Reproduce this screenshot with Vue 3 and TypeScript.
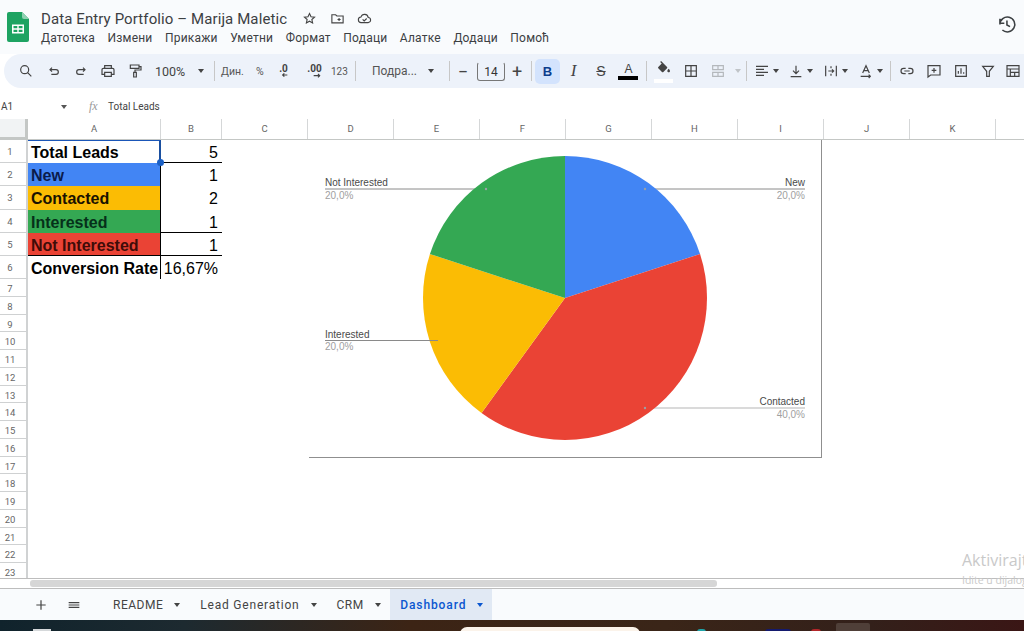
<script setup lang="ts">
import { h, type FunctionalComponent } from 'vue'

// icon strokes, 24 box
const icons: Record<string, string> = {
  star: 'M12 4l2.4 5.2 5.6.6-4.2 3.8 1.2 5.6L12 16.4 7 19.2l1.2-5.6L4 9.8l5.6-.6z',
  folder: 'M3 6h6l2 2h10v11H3zM12 13.5h5M14.500 11v5',
  cloud: 'M7 18.500a4.500 4.500 0 0 1-.6-9A6 6 0 0 1 18 10.500a4 4 0 0 1-.5 8zM9 13.500l2.500 2.500 4-4',
  history: 'M4.500 12a8.500 8.500 0 1 1 2.800 6.300M4.500 5.500v5h5M12.500 7.500V12.500l3.500 2',
  search: 'M10 4a6 6 0 1 0 0 12a6 6 0 0 0 0-12zM14.500 14.500L20 20',
  undo: 'M9 7L6 10l3 3M6 10h9a3.500 3.500 0 0 1 0 7H8',
  redo: 'M15 7l3 3-3 3M18 10H9a3.500 3.500 0 0 0 0 7h7',
  print: 'M7 8V4h10v4M7 17H3v-7a2 2 0 0 1 2-2h14a2 2 0 0 1 2 2v7h-4M7 14h10v6H7z',
  paint: 'M5 3h13v5H5zM18 5.500h3v5h-9v3M10 14h4v7h-4z',
  dec: 'M13 18h7M15.500 15.500L13 18l2.500 2.500',
  inc: 'M10 19h9M16.500 16.500L19 19l-2.500 2.500',
  border: 'M4 4h16v16H4zM12 4v16M4 12h16',
  merge: 'M4 4h16v6H4zM4 14h16v6H4zM12 5v4M12 15v4',
  align: 'M3 5h18M3 9.500h12M3 14h18M3 18.500h12',
  valign: 'M12 4v12M7.500 11.500L12 16l4.500-4.500M4 20.500h16',
  wrap: 'M4 4v16M20 4v16M12 5v3M12 16v3M8 12h8M13.500 9.500L16 12l-2.500 2.500',
  rotate: 'M7 15L12 4l5 11M8.500 11.500h7M4 20h14M16 17.500l2.500 2.500-2.500 2.500',
  link: 'M10 8H7a4 4 0 0 0 0 8h3M14 8h3a4 4 0 0 1 0 8h-3M8 12h8',
  comment: 'M3 4h18v14H7l-4 3zM12 7.500v7M8.500 11h7',
  chart: 'M4 4h16v16H4zM8 16v-4M12 16V8M16 16v-2',
  filter: 'M4 5h16l-6 7.500V20h-4v-7.500z',
  table: 'M3 4h18v16H3zM3 9h18M8 14h13M8 9v11M14.500 14v6',
  menu: 'M4 8.500h16M4 12h16M4 15.500h16',
  plus: 'M12 5v14M5 12h14'
}

const Ic: FunctionalComponent<{ n: string }> = (props) =>
  h('svg', { viewBox: '0 0 24 24', class: 'ic' }, [
    h('path', { d: icons[props.n], fill: 'none', stroke: 'currentColor', 'stroke-width': 1.8 })
  ])

const menus = ['Датотека', 'Измени', 'Прикажи', 'Уметни', 'Формат', 'Подаци', 'Алатке', 'Додаци', 'Помоћ']
const columns = ['A', 'B', 'C', 'D', 'E', 'F', 'G', 'H', 'I', 'J', 'K', '']

const filled = [
  { label: 'Total Leads', value: '5', cls: 'r1' },
  { label: 'New', value: '1', cls: 'r2' },
  { label: 'Contacted', value: '2', cls: 'r3' },
  { label: 'Interested', value: '1', cls: 'r4' },
  { label: 'Not Interested', value: '1', cls: 'r5' },
  { label: 'Conversion Rate', value: '16,67%', cls: 'r6' }
]
const emptyRows = Array.from({ length: 17 }, (_, i) => i + 7)

// pie, in chart coordinates
const cx = 256
const cy = 158
const radius = 142
const data = [
  { name: 'New', share: 0.2, color: '#4285f4' },
  { name: 'Contacted', share: 0.4, color: '#ea4335' },
  { name: 'Interested', share: 0.2, color: '#fbbc04' },
  { name: 'Not Interested', share: 0.2, color: '#34a853' }
]
let acc = 0
const slices = data.map((d) => {
  const a0 = acc * Math.PI * 2
  acc += d.share
  const a1 = acc * Math.PI * 2
  const large = d.share > 0.5 ? 1 : 0
  const p = (a: number) => `${cx + radius * Math.sin(a)} ${cy - radius * Math.cos(a)}`
  return { ...d, d: `M${cx} ${cy}L${p(a0)}A${radius} ${radius} 0 ${large} 1 ${p(a1)}Z` }
})

const labels = [
  { name: 'Not Interested', pct: '20,0%', x: 16, y: 49, x2: 177, anchor: 'start', dot: true },
  { name: 'New', pct: '20,0%', x: 496, y: 49, x2: 336, anchor: 'end', dot: true },
  { name: 'Contacted', pct: '40,0%', x: 496, y: 268, x2: 336, anchor: 'end', dot: true },
  { name: 'Interested', pct: '20,0%', x: 16, y: 200.500, x2: 129, anchor: 'start', dot: false }
]

const tabs = ['README', 'Lead Generation', 'CRM']
</script>

<template>
  <div class="app">
    <header class="top">
      <svg class="logo" viewBox="0 0 22 30">
        <path d="M2 0h13l7 7v21a2 2 0 0 1-2 2H2a2 2 0 0 1-2-2V2a2 2 0 0 1 2-2z" fill="#1ea362" />
        <path d="M15 0l7 7h-5a2 2 0 0 1-2-2z" fill="#8ed1b1" />
        <path d="M5 12.500h12v9H5zM6.500 14v2.300h3.800V14zM11.700 14v2.300h3.800V14zM6.500 17.700V20h3.800v-2.300zM11.700 17.700V20h3.800v-2.300z" fill="#fff" fill-rule="evenodd" />
      </svg>
      <div class="doc">
        <div class="title-row">
          <span class="title">Data Entry Portfolio – Marija Maletic</span>
          <span class="title-icons"><Ic n="star" /><Ic n="folder" /><Ic n="cloud" /></span>
        </div>
        <nav class="menus">
          <span v-for="m in menus" :key="m">{{ m }}</span>
        </nav>
      </div>
      <Ic class="history" n="history" />
    </header>

    <div class="toolbar">
      <span class="t w29"><Ic n="search" /></span>
      <span class="t"><Ic n="undo" /></span>
      <span class="t"><Ic n="redo" /></span>
      <span class="t"><Ic n="print" /></span>
      <span class="t"><Ic n="paint" /></span>
      <span class="zoom">100%</span>
      <i class="arrow a-zoom"></i>
      <i class="sep s-zoom"></i>
      <span class="fmt din">Дин.</span>
      <span class="fmt pct">%</span>
      <span class="t dec"><b>.0</b><Ic n="dec" /></span>
      <span class="t dec inc"><b>.00</b><Ic n="inc" /></span>
      <span class="fmt num">123</span>
      <i class="sep s-num"></i>
      <span class="font">Подра...</span>
      <i class="arrow a-font"></i>
      <i class="sep s-font"></i>
      <span class="t minus">−</span>
      <span class="size">14</span>
      <span class="t plus">+</span>
      <i class="sep s-plus"></i>
      <span class="bold">B</span>
      <span class="t letter italic">I</span>
      <span class="t letter strike">S</span>
      <span class="t letter color">A</span>
      <i class="sep s-color"></i>
      <span class="t fill">
        <svg class="ic" viewBox="0 0 24 24">
          <path fill="#444" d="M16.560 8.940L7.620 0 6.210 1.410l2.380 2.380-5.150 5.150c-.59.59-.59 1.540 0 2.120l5.500 5.500c.29.29.68.44 1.060.44s.77-.15 1.060-.44l5.500-5.500c.59-.58.59-1.530 0-2.120zM19 11.500s-2 2.170-2 3.500c0 1.100.9 2 2 2s2-.9 2-2c0-1.330-2-3.500-2-3.500z" />
        </svg>
      </span>
      <span class="t"><Ic n="border" /></span>
      <span class="t off"><Ic n="merge" /></span>
      <i class="arrow off-a"></i>
      <i class="sep s-merge"></i>
      <span class="t t-drop"><Ic n="align" /></span><i class="arrow"></i>
      <span class="t t-drop"><Ic n="valign" /></span><i class="arrow"></i>
      <span class="t t-drop"><Ic n="wrap" /></span><i class="arrow"></i>
      <span class="t t-drop"><Ic n="rotate" /></span><i class="arrow"></i>
      <i class="sep s-rotate"></i>
      <span class="t"><Ic n="link" /></span>
      <span class="t"><Ic n="comment" /></span>
      <span class="t"><Ic n="chart" /></span>
      <span class="t"><Ic n="filter" /></span>
      <span class="t last"><Ic n="table" /></span>
    </div>

    <div class="formula">
      <span class="ref">A1</span>
      <i class="arrow ref-arrow"></i>
      <span class="fx">fx</span>
      <span class="ftext">Total Leads</span>
    </div>

    <div class="col-head">
      <div class="corner"></div>
      <div v-for="c in columns" :key="c" class="col" :class="'col-' + c">{{ c }}</div>
    </div>

    <main class="sheet">
      <div v-for="(row, i) in filled" :key="row.label" class="row tall" :class="row.cls">
        <div class="num-cell">{{ i + 1 }}</div>
        <div class="a">{{ row.label }}</div>
        <div class="b">{{ row.value }}</div>
      </div>
      <div v-for="n in emptyRows" :key="n" class="row">
        <div class="num-cell">{{ n }}</div>
      </div>

      <i class="handle"></i>

      <div class="chart">
        <svg viewBox="0 0 512 317" width="512" height="317">
          <line v-for="l in labels" :key="l.name" :x1="l.x" :x2="l.x2" :y1="l.y" :y2="l.y" class="lead" :class="{ pale: l.name === 'Contacted' }" />
          <path v-for="s in slices" :key="s.name" :d="s.d" :fill="s.color" />
          <line x1="120" x2="129" y1="200.500" y2="200.500" class="lead" />
          <template v-for="l in labels" :key="l.name">
            <circle v-if="l.dot" :cx="l.x2" :cy="l.y" r="1.200" fill="#9aa0a6" />
            <text :x="l.x" :y="l.y - 3" :text-anchor="l.anchor" class="lab">{{ l.name }}</text>
            <text :x="l.x" :y="l.y + 9.500" :text-anchor="l.anchor" class="val">{{ l.pct }}</text>
          </template>
        </svg>
      </div>
    </main>

    <div class="scroll"><div class="thumb"></div></div>

    <footer class="tabs">
      <span class="tab-ic add"><Ic n="plus" /></span>
      <span class="tab-ic all"><Ic n="menu" /></span>
      <span v-for="t in tabs" :key="t" class="tab" :class="'tab-' + t.charAt(0)">{{ t }}<i class="arrow"></i></span>
      <span class="tab active">Dashboard<i class="arrow"></i></span>
    </footer>

    <div class="taskbar">
      <i class="tb-mark"></i>
      <i class="tb-search"></i>
      <i class="tb-dot teal"></i>
      <i class="tb-dot navy"></i>
      <i class="tb-dot red"></i>
      <i class="tb-box"></i>
    </div>

    <div class="activate">
      <div class="big">Aktivirajte</div>
      <div class="small">Idite u dijalog</div>
    </div>
  </div>
</template>

<style>
html,
body {
  margin: 0;
  overflow: hidden;
  background: #fff;
}
</style>

<style scoped>
.app {
  position: relative;
  width: 1024px;
  height: 631px;
  display: flex;
  flex-direction: column;
  overflow: hidden;
  font-family: Roboto, "Liberation Sans", sans-serif;
  color: #444746;
}

.ic {
  width: 16px;
  height: 16px;
  display: block;
}

/* Header */
.top {
  height: 54px;
  flex: none;
  display: flex;
  background: #f9fbfd;
  padding: 12px 0 0 7px;
  box-sizing: border-box;
}
.logo {
  width: 22px;
  height: 30px;
  flex: none;
}
.doc {
  margin-left: 12px;
  flex: 1;
}
.title-row {
  display: flex;
  align-items: center;
  height: 13px;
}
.title {
  font-size: 15px;
  letter-spacing: 0.1px;
  color: #3c4043;
}
.title-icons {
  display: flex;
  gap: 12.500px;
  margin-left: 15px;
  color: #444;
}
.title-icons .ic {
  width: 15px;
  height: 15px;
}
.menus {
  display: flex;
  gap: 12.500px;
  margin-top: 6px;
  font-size: 12px;
  letter-spacing: 0.2px;
  color: #3c4043;
}
.history {
  width: 21px;
  height: 21px;
  margin: 2px 7px 0 0;
  color: #3c4043;
}

/* Toolbar */
.toolbar {
  height: 34px;
  flex: none;
  margin-left: 4px;
  padding-left: 7px;
  display: flex;
  align-items: center;
  background: #edf2fa;
  border-radius: 17px 0 0 17px;
  white-space: nowrap;
  color: #444;
  overflow: hidden;
}
.t {
  width: 27px;
  height: 25px;
  flex: none;
  display: flex;
  align-items: center;
  justify-content: center;
}
.w29 {
  width: 29px;
}
.arrow {
  width: 0;
  height: 0;
  flex: none;
  border: 3.500px solid transparent;
  border-top: 4px solid currentColor;
  border-bottom: 0;
  display: inline-block;
}
.sep {
  width: 1px;
  height: 20px;
  flex: none;
  background: #c7c7c7;
}
.zoom {
  flex: none;
  font-size: 12.500px;
  margin-left: 7px;
  width: 32px;
}
.a-zoom {
  margin-left: 11px;
}
.s-zoom {
  margin-left: 10px;
}
.fmt {
  flex: none;
  font-size: 10.500px;
  color: #555;
}
.din {
  margin-left: 6px;
  width: 24px;
}
.pct {
  margin-left: 11px;
  width: 10px;
}
.dec {
  position: relative;
  margin-left: 1px;
  width: 33px;
}
.dec + .dec {
  margin-left: 0;
}
.dec .ic {
  position: absolute;
  top: 4px;
  left: 7px;
}
.dec b {
  font-size: 10px;
  position: relative;
  top: -3px;
}
.inc {
  width: 29px;
}
.num {
  margin-left: 2px;
  width: 17px;
  font-size: 10px;
}
.s-num {
  margin-left: 7px;
}
.font {
  flex: none;
  font-size: 12px;
  margin-left: 16px;
  width: 46px;
  color: #555;
}
.a-font {
  margin-left: 10px;
}
.s-font {
  margin-left: 15px;
}
.minus,
.plus {
  font-size: 18px;
  width: 26px;
}
.size {
  width: 28px;
  height: 19px;
  flex: none;
  box-sizing: border-box;
  border: 1px solid #777;
  border-top-color: transparent;
  border-radius: 3px;
  font-size: 12px;
  line-height: 18px;
  text-align: center;
  margin-left: 1px;
  color: #333;
}
.plus {
  margin-left: -1px;
}
.s-plus {
  margin-left: 1px;
}
.bold {
  width: 25px;
  height: 25px;
  flex: none;
  margin-left: 3px;
  border-radius: 5px;
  background: #d3e3fd;
  color: #0b3d8c;
  font: bold 13px/25px "Liberation Sans", sans-serif;
  text-align: center;
}
.letter {
  font-family: "Liberation Sans", sans-serif;
  font-size: 15px;
  position: relative;
}
.italic {
  font-family: "Liberation Serif", serif;
  font-style: italic;
  font-size: 17px;
}
.strike {
  text-decoration: line-through;
  font-size: 14px;
  width: 28px;
}
.color {
  font-size: 12px;
  align-items: flex-start;
  padding-top: 3px;
  box-sizing: border-box;
}
.color::after {
  content: "";
  position: absolute;
  left: 3px;
  top: 17px;
  width: 20px;
  height: 4px;
  background: #000;
}
.s-color {
  margin-left: 4px;
}
.fill {
  position: relative;
  margin-left: 3px;
}
.fill .ic {
  margin-top: -5px;
}
.fill::after {
  content: "";
  position: absolute;
  left: 4px;
  top: 20px;
  width: 19px;
  height: 4px;
  background: #fff;
}
.off {
  color: #b4b8bc;
}
.off-a {
  color: #c0c4c8;
  margin-left: 4px;
}
.s-merge {
  margin-left: 5px;
}
.t-drop {
  width: 21.670px;
  margin-left: 4px;
}
.t-drop + .arrow {
  margin: 0 3px 0 0;
}
.s-rotate {
  margin: 0 3px 0 4px;
}
.last {
  margin-left: -2px;
}

/* Formula bar */
.formula {
  height: 31px;
  flex: none;
  display: flex;
  align-items: center;
  font-size: 10px;
  color: #444;
  box-sizing: border-box;
  padding-top: 6px;
}
.ref {
  margin-left: 1px;
  width: 60px;
}
.ref-arrow {
  color: #555;
}
.fx {
  margin-left: 22px;
  width: 19px;
  font: italic 12px "Liberation Serif", serif;
  color: #999;
}

/* Column headers */
.col-head {
  height: 21px;
  flex: none;
  display: flex;
  border-bottom: 1px solid #c4c7c5;
  box-sizing: border-box;
}
.corner {
  width: 28px;
  flex: none;
  box-sizing: border-box;
  background: #f1f3f4;
  border-right: 3px solid #c4c7c5;
  border-bottom: 3px solid #c4c7c5;
  margin-bottom: -1px;
}
.col {
  width: 86px;
  flex: none;
  box-sizing: border-box;
  border-right: 1px solid #d5d7d8;
  font-size: 9.500px;
  line-height: 20px;
  text-align: center;
  color: #666;
}
.col-A {
  width: 133px;
}
.col-B {
  width: 61px;
}

/* Grid */
.sheet {
  position: relative;
  height: 438px;
  flex: none;
  overflow: hidden;
}
.row {
  height: 17.750px;
  display: flex;
  color: #000;
}
.tall {
  height: 23.200px;
}
.num-cell {
  width: 28px;
  flex: none;
  box-sizing: border-box;
  height: 100%;
  border-right: 2px solid #d0d2d3;
  border-bottom: 1px solid #cfd1d2;
  font-size: 9.500px;
  color: #666;
  text-align: center;
  padding: 4px 6px 0 0;
}
.tall .num-cell {
  padding-top: 6px;
}
.a,
.b {
  box-sizing: border-box;
  height: 100%;
  font-size: 16px;
  line-height: 25px;
  font-family: "Liberation Sans", sans-serif;
}
.a {
  width: 133px;
  flex: none;
  padding-left: 3px;
  font-weight: 700;
  border-right: 1px solid #000;
  white-space: nowrap;
  overflow: hidden;
}
.b {
  width: 61px;
  flex: none;
  text-align: right;
  padding-right: 4px;
}
.r1 .a {
  border-top: 1px solid #1a56b8;
  border-right: 2px solid #1a4f9f;
  line-height: 24px;
}
.r1 .b,
.r4 .b,
.r5 .a,
.r5 .b {
  border-bottom: 1px solid #000;
}
.r2 .a {
  background: #4285f4;
  color: #0b1b4a;
}
.r3 .a {
  background: #fbbc04;
  color: #1a1200;
}
.r4 .a {
  background: #34a853;
  color: #06301a;
}
.r5 .a {
  background: #ea4335;
  color: #400c08;
}
.handle {
  position: absolute;
  left: 157px;
  top: 19px;
  width: 7px;
  height: 7px;
  border-radius: 50%;
  background: #1a5fc4;
}

/* Chart */
.chart {
  position: absolute;
  left: 309px;
  top: 0;
  width: 513px;
  height: 318px;
  box-sizing: border-box;
  background: #fff;
  border-right: 1px solid #8f8f8f;
  border-bottom: 1px solid #8f8f8f;
}
.chart svg {
  display: block;
}
.lead {
  stroke: #8a8a8a;
  stroke-width: 1;
}
.pale {
  stroke: #b5b5b5;
}
.lab,
.val {
  font-family: "Liberation Sans", sans-serif;
  font-size: 10px;
}
.lab {
  fill: #4a4a4a;
}
.val {
  fill: #a0a0a0;
}

/* Watermark */
.activate {
  position: absolute;
  left: 962px;
  top: 550px;
  white-space: nowrap;
  font-family: "Open Sans", sans-serif;
  color: #c9c9c9;
}
.big {
  font-size: 16px;
  line-height: 20px;
}
.small {
  font-size: 10.500px;
  line-height: 14px;
  margin-top: 3px;
}

/* Horizontal scrollbar */
.scroll {
  height: 11px;
  flex: none;
  box-sizing: border-box;
  border-top: 1px solid #bdbdbd;
  border-bottom: 1px solid #bdbdbd;
  padding: 1px 0 0 30px;
}
.thumb {
  width: 687px;
  height: 7px;
  border-radius: 3px;
  background: #d6d6d6;
}

/* Sheet tabs */
.tabs {
  height: 31px;
  flex: none;
  display: flex;
  align-items: center;
  background: #f9fbfd;
  font-size: 12px;
  letter-spacing: 0.5px;
  color: #444;
}
.tab-ic {
  flex: none;
}
.add {
  margin-left: 33px;
}
.all {
  margin-left: 17px;
}
.tab {
  display: flex;
  align-items: center;
  gap: 11px;
  height: 100%;
  white-space: nowrap;
  margin-left: 31px;
}
.tab-L {
  margin-left: 20px;
  letter-spacing: 0.8px;
}
.tab-C {
  margin-left: 20px;
}
.tab.active {
  margin-left: 9.500px;
  padding: 0 9px 0 10px;
  background: #e1e9f4;
  color: #0b57d0;
  font-weight: 500;
  letter-spacing: 0.9px;
}

/* Windows taskbar strip */
.taskbar {
  flex: 1;
  position: relative;
  overflow: hidden;
  background: linear-gradient(90deg, #10232c 0%, #1d2a30 18%, #3c2415 40%, #3a2518 65%, #33201a 85%, #3a1615 100%);
}
.tb-mark,
.tb-search,
.tb-dot,
.tb-box {
  position: absolute;
  display: block;
}
.tb-mark {
  left: 33px;
  top: 9px;
  width: 18px;
  height: 2px;
  background: #d5d8da;
}
.tb-search {
  left: 460px;
  top: 7px;
  width: 180px;
  height: 12px;
  background: #fbf3ea;
  border-radius: 7px 7px 0 0;
}
.tb-dot {
  top: 9px;
  height: 6px;
  border-radius: 3px 3px 0 0;
}
.teal {
  left: 697px;
  width: 9px;
  background: #1fa3a8;
}
.navy {
  left: 765px;
  width: 26px;
  background: #141a6e;
}
.red {
  left: 811px;
  width: 10px;
  background: #b3262a;
}
.tb-box {
  left: 836px;
  top: 3px;
  width: 34px;
  height: 10px;
  background: #4f3f38;
  border-radius: 2px 2px 0 0;
}
</style>
